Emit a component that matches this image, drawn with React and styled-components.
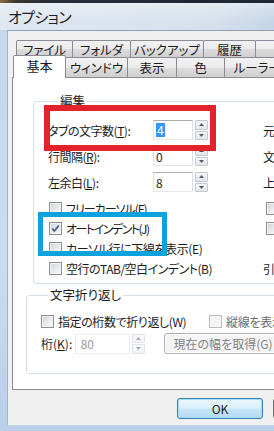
import React from 'react';
import styled, { createGlobalStyle } from 'styled-components';

const GlobalStyle = createGlobalStyle`
  html, body { margin: 0; padding: 0; overflow: hidden; background: #262c38; }
  body {
    font-family: "Noto Sans CJK JP", "Noto Sans", sans-serif;
    font-size: 12px;
    color: #1b1b1b;
    font-feature-settings: "palt";
  }
`;

const Screen = styled.div`
  position: relative;
  width: 274px;
  height: 431px;
  overflow: hidden;
  background: #262c38;
`;

const DesktopStrip = styled.div`
  height: 3px;
  background: linear-gradient(90deg, #8a6d3c 0, #3a3630 6%, #262c38 20%, #1f2633 100%);
`;

const Window = styled.div`
  width: 480px;
  height: 428px;
  display: flex;
  flex-direction: column;
  background: linear-gradient(180deg, #c4d7ee 0%, #cadcf0 60%, #b9cfe9 100%);
`;

const TitleBar = styled.div`
  height: 27px;
  flex: none;
  display: flex;
  align-items: center;
  padding-left: 8px;
  font-size: 15px;
  letter-spacing: -0.6px;
  color: #1e2228;
  background:
    linear-gradient(180deg, rgba(255,255,255,0.35) 0%, rgba(255,255,255,0) 70%),
    linear-gradient(90deg, #dfe7f1 0%, #d6e0ec 45%, #b4c9e1 70%, #8eaed2 100%);
`;

const Frame = styled.div`
  flex: none;
  height: 395px;
  padding-left: 7px;
`;

const Client = styled.div`
  height: 100%;
  box-sizing: border-box;
  display: flex;
  flex-direction: column;
  padding: 9px 0 0 4px;
  background: #f0f0f0;
  border-top: 1px solid #8d9db3;
  border-left: 1px solid #a3b2c6;
`;

const TabRow = styled.div`
  display: flex;
  align-items: flex-end;
  height: ${p => p.$h}px;
  padding-left: ${p => p.$inset}px;
`;

const Tab = styled.div`
  flex: none;
  width: ${p => p.$w}px;
  height: ${p => p.$h}px;
  box-sizing: border-box;
  display: flex;
  align-items: center;
  justify-content: center;
  font-size: 12.5px;
  border: 1px solid #898c95;
  border-bottom: none;
  border-radius: 2px 2px 0 0;
  margin-right: -1px;
  background: linear-gradient(180deg, #f2f2f2 0%, #ebebeb 50%, #dddddd 51%, #cfcfcf 100%);
  white-space: nowrap;
  overflow: hidden;
`;

const ActiveTab = styled(Tab)`
  position: relative;
  z-index: 2;
  background: #ffffff;
  margin-bottom: -1px;
  font-size: 13px;
  padding-bottom: 3px;
`;

const Panel = styled.div`
  height: 313px;
  box-sizing: border-box;
  background: #ffffff;
  border: 1px solid #898c95;
  padding-top: 16px;
`;

const Group = styled.fieldset`
  margin: ${p => p.$top}px 0 0 ${p => p.$left}px;
  padding: 0 0 0 14px;
  border: 1px solid #d5dfe5;
  border-radius: 3px;
  min-width: 0;
`;

const Legend = styled.legend`
  margin-left: ${p => p.$ml}px;
  padding: 0 2px;
  line-height: 14px;
  font-size: 12.5px;
`;

const Rows = styled.div`
  display: flex;
  flex-direction: column;
  gap: ${p => p.$gap}px;
  padding: ${p => p.$pad};
`;

const Row = styled.div`
  display: flex;
  align-items: center;
  height: ${p => p.$h || 20}px;
  margin-top: ${p => p.$mt || 0}px;
`;

const LeftCell = styled.div`
  width: 215px;
  flex: none;
  display: flex;
  align-items: center;
`;

const RightCell = styled.div`
  display: flex;
  align-items: center;
  white-space: nowrap;
  padding-left: ${p => p.$pl || 0}px;
`;

const Label = styled.span`
  width: ${p => (p.$w ? `${p.$w}px` : 'auto')};
  flex: none;
  white-space: nowrap;
  letter-spacing: ${p => p.$ls || 0}px;
  color: ${p => (p.$muted ? '#6d6d6d' : 'inherit')};
`;

const Field = styled.div`
  width: ${p => p.$w}px;
  height: 20px;
  flex: none;
  box-sizing: border-box;
  display: flex;
  align-items: center;
  padding-left: 2px;
  background: #ffffff;
  border: 1px solid;
  border-color: ${p => (p.$disabled ? '#ececec' : '#abadb3 #dbdfe6 #e3e9ef #e2e3ea')};
  color: ${p => (p.$disabled ? '#9a9a9a' : '#1b1b1b')};
  margin-left: ${p => p.$ml || 0}px;
`;

const Selected = styled.span`
  background: #3399ff;
  color: #ffffff;
  padding: 0 1px;
  line-height: 14px;
`;

const Spin = styled.div`
  width: 13px;
  height: 20px;
  flex: none;
  margin-left: 2px;
  display: flex;
  flex-direction: column;
  gap: 1px;
  opacity: ${p => (p.$disabled ? 0.5 : 1)};
`;

const SpinHalf = styled.div`
  flex: 1;
  display: flex;
  align-items: center;
  justify-content: center;
  box-sizing: border-box;
  border: 1px solid #c3c9d2;
  border-radius: 1px;
  background: linear-gradient(180deg, #f7f7f7 0%, #e4e6ea 100%);
`;

const Box = styled.span`
  width: 13px;
  height: 13px;
  flex: none;
  box-sizing: border-box;
  display: inline-flex;
  align-items: center;
  justify-content: center;
  margin: 0 4px 0 ${p => p.$ml ?? 1}px;
  border: 1px solid ${p => (p.$disabled ? '#bcbcbc' : '#8e8f8f')};
  background: ${p =>
    p.$disabled
      ? '#f4f4f4'
      : 'linear-gradient(135deg, #cdd1d6 0%, #e9ebee 55%, #f9f9f9 100%)'};
  box-shadow: inset 0 0 0 1px ${p => (p.$disabled ? '#f7f7f7' : '#f2f3f4')};
`;

const PushButton = styled.div`
  width: ${p => p.$w}px;
  height: 21px;
  flex: none;
  box-sizing: border-box;
  display: flex;
  align-items: center;
  justify-content: center;
  white-space: nowrap;
  border-radius: 3px;
  margin-left: ${p => p.$ml || 0}px;
  border: 1px solid ${p => (p.$default ? '#3c7fb1' : p.$disabled ? '#adb2b5' : '#707070')};
  color: ${p => (p.$disabled ? '#838383' : '#1b1b1b')};
  background: ${p =>
    p.$default
      ? 'linear-gradient(180deg, #eaf6fd 0%, #dcf0fc 45%, #c6e5f8 55%, #b3d9f2 100%)'
      : p.$disabled
      ? '#f4f4f4'
      : 'linear-gradient(180deg, #f2f2f2 0%, #ebebeb 45%, #dddddd 55%, #cfcfcf 100%)'};
  box-shadow: ${p => (p.$default ? 'inset 0 0 0 1px #9fe0fb' : 'inset 0 0 0 1px #fcfcfc')};
`;

const ButtonRow = styled.div`
  display: flex;
  padding: 8px 0 0 165px;
  gap: 10px;
`;

const Mark = styled.div`
  position: absolute;
  left: ${p => p.$x}px;
  top: ${p => p.$y}px;
  width: ${p => p.$w}px;
  height: ${p => p.$h}px;
  box-sizing: border-box;
  border: ${p => p.$t}px solid ${p => p.$c};
  pointer-events: none;
`;

const Arrow = ({ up }) => (
  <svg width="5" height="3" viewBox="0 0 5 3">
    <path d={up ? 'M0 3 L2.5 0 L5 3 Z' : 'M0 0 L5 0 L2.5 3 Z'} fill="#4d5a75" />
  </svg>
);

const Spinner = ({ disabled }) => (
  <Spin $disabled={disabled}>
    <SpinHalf><Arrow up /></SpinHalf>
    <SpinHalf><Arrow /></SpinHalf>
  </Spin>
);

const Check = ({ checked, disabled, ml }) => (
  <Box $disabled={disabled} $ml={ml}>
    {checked && (
      <svg width="9" height="9" viewBox="0 0 9 9">
        <path d="M1.2 4.6 L3.4 7 L7.8 1.6" fill="none" stroke="#3d5a8f" strokeWidth="1.6" />
      </svg>
    )}
  </Box>
);

const topTabs = [
  ['ファイル', 57],
  ['フォルダ', 59],
  ['バックアップ', 74],
  ['履歴', 53],
  ['拡張', 70],
];

const bottomTabs = [
  ['ウィンドウ', 63],
  ['表示', 50],
  ['色', 49],
  ['ルーラー・行番号', 110],
];

const numberRows = [
  { label: <>タブの文字数(<u>T</u>):</>, value: '4', selected: true, right: '元に戻す回数(U):' },
  { label: <>行間隔(<u>R</u>):</>, value: '0', right: '文字間隔(A):' },
  { label: <>左余白(<u>L</u>):</>, value: '8', right: '上余白(M):' },
];

const checkRows = [
  { label: 'フリーカーソル(F)', ls: -1, rightCheck: true },
  { label: 'オートインデント(J)', ls: -1.5, checked: true, rightCheck: true },
  { label: 'カーソル行に下線を表示(E)', ls: -0.4 },
  { label: '空行のTAB/空白インデント(B)', ls: -0.5, right: '引用符(Q):' },
];

export default function App() {
  return (
    <Screen>
      <GlobalStyle />
      <DesktopStrip />
      <Window>
        <TitleBar>オプション</TitleBar>
        <Frame>
          <Client>
            <TabRow $h={17} $inset={4}>
              {topTabs.map(([t, w]) => (
                <Tab key={t} $w={w} $h={17}>{t}</Tab>
              ))}
            </TabRow>
            <TabRow $h={20} $inset={1}>
              <ActiveTab $w={53} $h={23}>基本</ActiveTab>
              {bottomTabs.map(([t, w]) => (
                <Tab key={t} $w={w} $h={20}>{t}</Tab>
              ))}
            </TabRow>
            <Panel>
              <Group $top={0} $left={20}>
                <Legend $ml={10}>編集</Legend>
                <Rows $gap={0} $pad="12px 0 5px 0">
                  {numberRows.map((r, i) => (
                    <Row key={i} $mt={i ? 6 : 0}>
                      <LeftCell>
                        <Label $w={105} $ls={-0.5}>{r.label}</Label>
                        <Field $w={40}>
                          {r.selected ? <Selected>{r.value}</Selected> : r.value}
                        </Field>
                        <Spinner />
                      </LeftCell>
                      <RightCell>{r.right}</RightCell>
                    </Row>
                  ))}
                  {checkRows.map((r, i) => (
                    <Row key={r.label} $mt={i ? 0 : 6}>
                      <LeftCell>
                        <Check checked={r.checked} />
                        <Label $ls={r.ls}>{r.label}</Label>
                      </LeftCell>
                      <RightCell $pl={r.rightCheck ? 2 : 0}>
                        {r.rightCheck && <Check />}
                        {r.right}
                      </RightCell>
                    </Row>
                  ))}
                </Rows>
              </Group>
              <Group $top={4} $left={13}>
                <Legend $ml={7}>文字折り返し</Legend>
                <Rows $gap={2} $pad="9px 0 19px 0">
                  <Row>
                    <Check ml={0} />
                    <Label $w={150} $ls={-0.4}>指定の桁数で折り返し(W)</Label>
                    <Check disabled />
                    <Label $muted $ls={-0.3}>縦線を表示(V)</Label>
                  </Row>
                  <Row $h={21}>
                    <Label $w={34}>桁(<u>K</u>):</Label>
                    <Field $w={55} $disabled>&nbsp;80</Field>
                    <Spinner disabled />
                    <PushButton $w={118} $ml={19} $disabled>現在の幅を取得(G)</PushButton>
                  </Row>
                </Rows>
              </Group>
            </Panel>
            <ButtonRow>
              <PushButton $w={86} $default>OK</PushButton>
              <PushButton $w={86}>キャンセル</PushButton>
            </ButtonRow>
          </Client>
        </Frame>
      </Window>
      <Mark $x={44} $y={105} $w={172} $h={46} $t={6} $c="#e3222b" />
      <Mark $x={38} $y={212} $w={129} $h={44} $t={5} $c="#0ea2dc" />
    </Screen>
  );
}
